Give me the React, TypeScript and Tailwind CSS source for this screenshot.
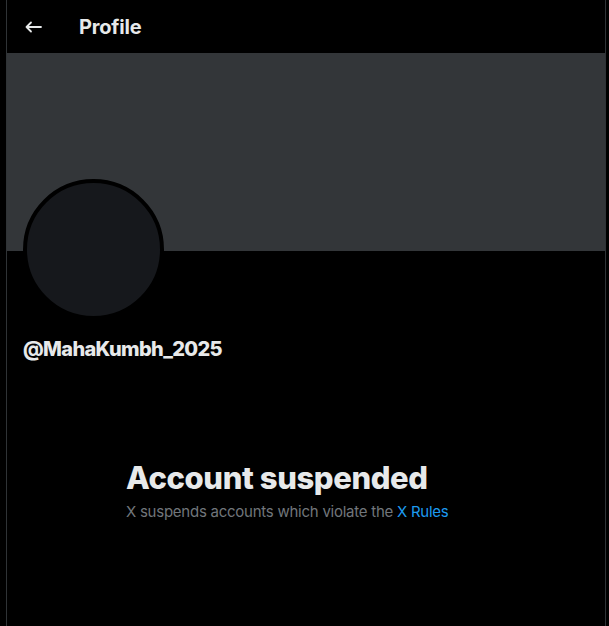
const FONT = { fontFamily: 'Inter, "Liberation Sans", sans-serif' };

const BackArrow = () => (
  <svg width="17" height="12" viewBox="0 0 17 12" fill="none" stroke="#e7e9ea" strokeWidth="1.8" strokeLinecap="round" strokeLinejoin="round">
    <path d="M16 6H1.5M6 1.5L1.5 6L6 10.5" />
  </svg>
);

export default function App() {
  return (
    <div className="min-h-[626px] w-[609px] bg-black text-[#e7e9ea]" style={FONT}>
      <div className="ml-[6px] w-[600px] min-h-[626px] border-x border-[#2f3336]">
        <header className="h-[53px] flex items-center px-4">
          <div className="w-[56px] flex items-center pl-[2px]">
            <BackArrow />
          </div>
          <h1 className="text-[20px] font-bold leading-6 tracking-[-0.2px]">Profile</h1>
        </header>

        <div className="h-[198px] bg-[#333639]" />

        <div className="px-4">
          <div className="mt-[-72px] w-[141px] h-[141px] rounded-full border-4 border-black bg-[#16181c]" />
          <div className="mt-[17px] text-[20px] font-extrabold leading-6 tracking-[-0.65px]">@MahaKumbh_2025</div>
        </div>

        <div className="mx-auto w-[400px] px-5 mt-[99px]">
          <h2 className="text-[31px] font-extrabold leading-9 tracking-[-0.4px]">Account suspended</h2>
          <p className="mt-[6px] text-[15px] leading-5 text-[#71767b] tracking-[-0.25px]">
            X suspends accounts which violate the <span className="text-[#1d9bf0]">X Rules</span>
          </p>
        </div>
      </div>
    </div>
  );
}
